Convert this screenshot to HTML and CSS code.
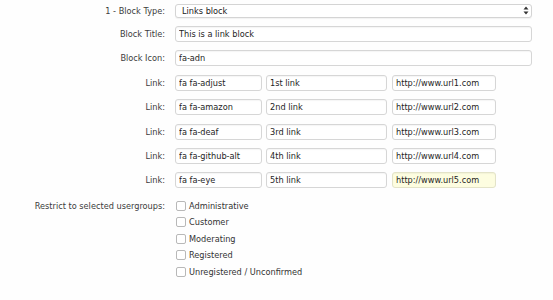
FILE: index.html
```html
<!DOCTYPE html>
<html lang="en">
<head>
    <meta charset="UTF-8">
    <meta name="viewport" content="width=device-width, initial-scale=1.0">
    <title>Block Options</title>
    <link rel="stylesheet" href="styles.css">
</head>
<body>
    <form class="options">
        <div class="row">
            <label class="label" for="type">1 - Block Type:</label>
            <div class="control select-wrap">
                <select id="type" class="select">
                    <option>Links block</option>
                </select>
                <svg class="arrows" width="6" height="9" viewBox="0 0 6 9">
                    <path d="M3 0.5 L5.5 3.5 L0.5 3.5 Z M3 8.5 L5.5 5.5 L0.5 5.5 Z" fill="#333"/>
                </svg>
            </div>
        </div>

        <div class="row">
            <label class="label" for="title">Block Title:</label>
            <div class="control">
                <input type="text" id="title" class="text wide" value="This is a link block">
            </div>
        </div>

        <div class="row">
            <label class="label" for="icon">Block Icon:</label>
            <div class="control">
                <input type="text" id="icon" class="text wide" value="fa-adn">
            </div>
        </div>

        <div class="row link-row first">
            <label class="label">Link:</label>
            <div class="control links">
                <input type="text" class="text icon" value="fa fa-adjust">
                <input type="text" class="text name" value="1st link">
                <input type="text" class="text url" value="http://www.url1.com">
            </div>
        </div>

        <div class="row link-row">
            <label class="label">Link:</label>
            <div class="control links">
                <input type="text" class="text icon" value="fa fa-amazon">
                <input type="text" class="text name" value="2nd link">
                <input type="text" class="text url" value="http://www.url2.com">
            </div>
        </div>

        <div class="row link-row">
            <label class="label">Link:</label>
            <div class="control links">
                <input type="text" class="text icon" value="fa fa-deaf">
                <input type="text" class="text name" value="3rd link">
                <input type="text" class="text url" value="http://www.url3.com">
            </div>
        </div>

        <div class="row link-row">
            <label class="label">Link:</label>
            <div class="control links">
                <input type="text" class="text icon" value="fa fa-github-alt">
                <input type="text" class="text name" value="4th link">
                <input type="text" class="text url" value="http://www.url4.com">
            </div>
        </div>

        <div class="row link-row">
            <label class="label">Link:</label>
            <div class="control links">
                <input type="text" class="text icon" value="fa fa-eye">
                <input type="text" class="text name" value="5th link">
                <input type="text" class="text url autofill" value="http://www.url5.com">
            </div>
        </div>

        <div class="row groups">
            <label class="label">Restrict to selected usergroups:</label>
            <ul class="checklist">
                <li><label><span class="box"></span>Administrative</label></li>
                <li><label><span class="box"></span>Customer</label></li>
                <li><label><span class="box"></span>Moderating</label></li>
                <li><label><span class="box"></span>Registered</label></li>
                <li><label><span class="box"></span>Unregistered / Unconfirmed</label></li>
            </ul>
        </div>
    </form>
</body>
</html>
```

FILE: styles.css
```css
body {
    font-family: "DejaVu Sans", Verdana, sans-serif;
    font-size: 8.2px;
    color: #333;
    background-color: #fefefe;
    margin: 0;
    padding: 4px 0 0 0;
}

.options {
    width: 532px;
}

.row {
    display: flex;
    align-items: center;
    margin-bottom: 8px;
}

.link-row {
    margin-bottom: 8.3px;
}

.link-row.first {
    margin-top: 9px;
}

.label {
    width: 165px;
    padding-right: 10px;
    text-align: right;
    color: #3c3c3c;
    flex-shrink: 0;
}

.control {
    flex: 1;
    display: flex;
}

.select-wrap {
    position: relative;
}

.select {
    appearance: none;
    -webkit-appearance: none;
    width: 100%;
    height: 14px;
    margin: 0;
    padding: 0 0 0 6px;
    font: inherit;
    color: #222;
    background-color: #fff;
    border: 1px solid #d4d4d4;
    border-radius: 3px;
    box-shadow: 0 1px 1px rgba(0, 0, 0, 0.05);
}

.arrows {
    position: absolute;
    right: 3px;
    top: 2px;
}

.text {
    height: 16px;
    margin: 0;
    padding: 0 3px;
    box-sizing: border-box;
    font: inherit;
    color: #1e1e1e;
    background-color: #fff;
    border: 1px solid #d6d6d6;
    border-radius: 3px;
    box-shadow: inset 0 1px 1px rgba(0, 0, 0, 0.04);
}

.wide {
    width: 100%;
}

.links {
    gap: 4px;
}

.links .icon {
    width: 87px;
}

.links .name {
    width: 121px;
}

.links .url {
    width: 104px;
    margin-left: 1px;
}

.autofill {
    background-color: #fdfde0;
    border-color: #e3e3c8;
}

.groups {
    align-items: flex-start;
    margin-top: 9.5px;
}

.checklist {
    list-style: none;
    margin: 0;
    padding: 0;
}

.checklist li {
    height: 16.5px;
    display: flex;
    align-items: center;
}

.checklist label {
    display: flex;
    align-items: center;
}

.box {
    width: 8px;
    height: 8px;
    margin: 0 3px 0 1px;
    border: 1px solid #b8b8b8;
    border-radius: 2px;
    background-color: #fff;
}

.groups .label {
    line-height: 16.5px;
}
```
